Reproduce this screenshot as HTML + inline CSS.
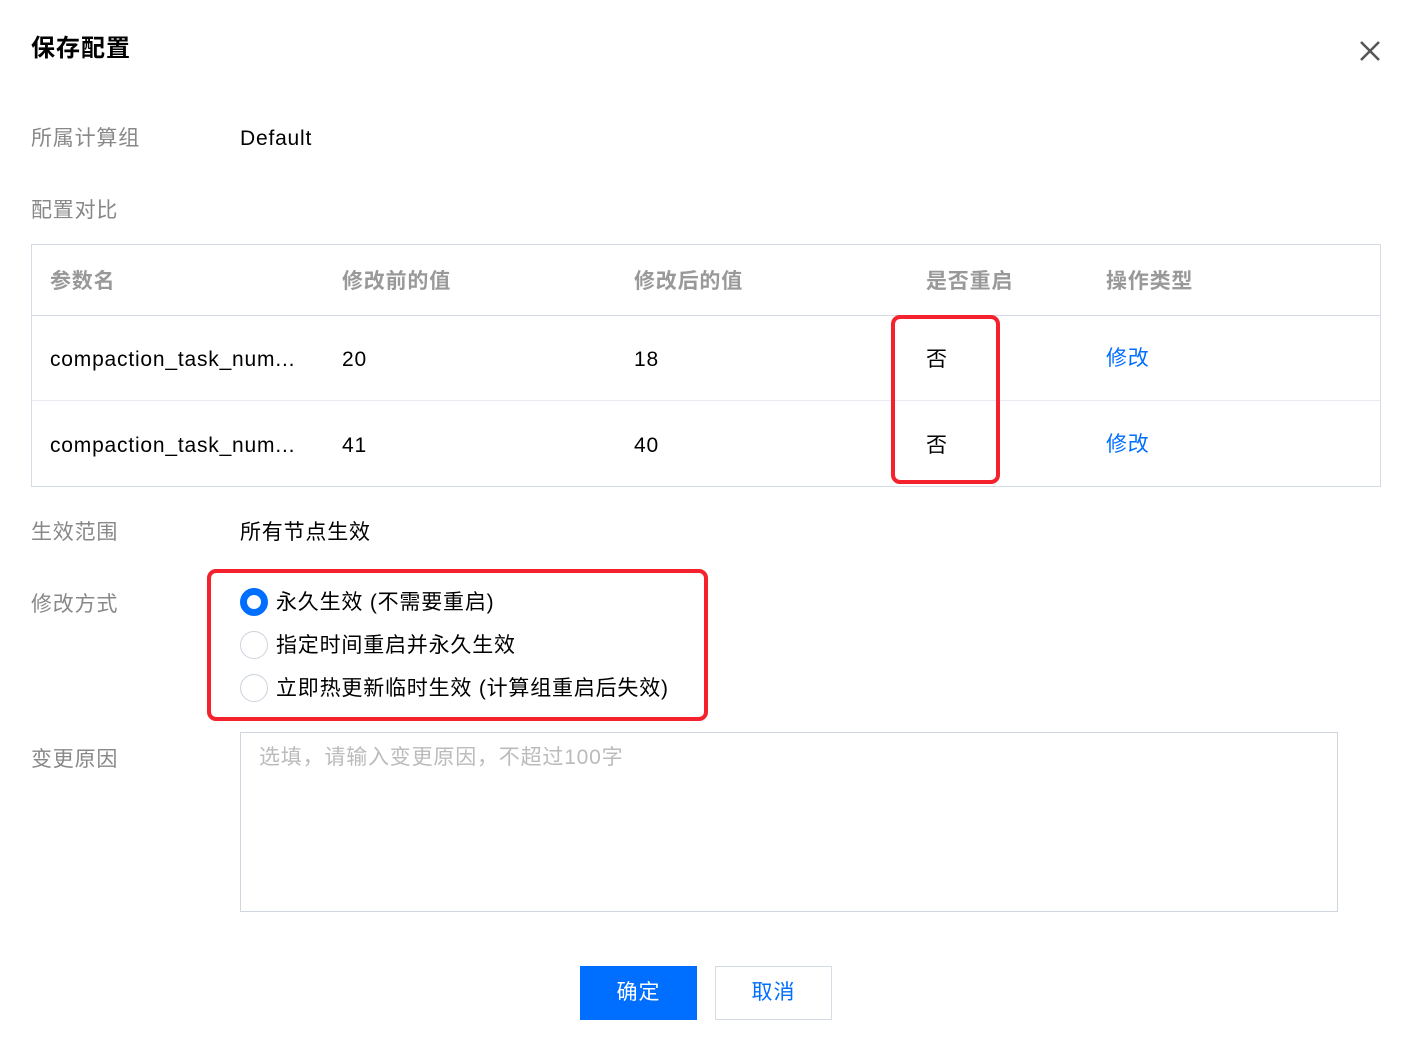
<!DOCTYPE html><html><head><meta charset="utf-8"><style>
body{margin:0;width:1416px;height:1052px;background:#fff;font-family:"Liberation Sans","Noto Sans CJK SC",sans-serif;position:relative;overflow:hidden;color:#000}
.a{position:absolute;white-space:nowrap;font-size:21px;line-height:24px;letter-spacing:0.8px}
.g{color:#888}
.h{color:#999;font-weight:bold}
.b{color:#006eff}
.red{position:absolute;border:4px solid #f5222d;border-radius:9px;box-sizing:border-box}
.r{position:absolute;left:240px;width:28px;height:28px;border-radius:50%;box-sizing:border-box;border:1px solid #ccd2dc}
</style></head><body>
<div class="a" style="left:31px;top:35px;font-size:24px;font-weight:bold;line-height:28px;letter-spacing:1px">保存配置</div>
<svg class="a" style="left:1359px;top:40px" width="22" height="22"><path d="M2 2L20 20M20 2L2 20" stroke="#555" stroke-width="2.5"/></svg>
<div class="a g" style="left:31px;top:127px">所属计算组</div>
<div class="a" style="left:240px;top:127px">Default</div>
<div class="a g" style="left:31px;top:199px">配置对比</div>
<div style="position:absolute;left:31px;top:244px;width:1350px;height:243px;border:1px solid #d5dbe5;box-sizing:border-box"></div>
<div style="position:absolute;left:32px;top:315px;width:1348px;height:1px;background:#d5dbe5"></div>
<div style="position:absolute;left:32px;top:400px;width:1348px;height:1px;background:#e8ecf2"></div>
<div class="a h" style="left:50px;top:270px">参数名</div>
<div class="a h" style="left:342px;top:270px">修改前的值</div>
<div class="a h" style="left:634px;top:270px">修改后的值</div>
<div class="a h" style="left:926px;top:270px">是否重启</div>
<div class="a h" style="left:1106px;top:270px">操作类型</div>
<div class="a" style="left:50px;top:348px">compaction_task_num...</div>
<div class="a" style="left:342px;top:348px">20</div>
<div class="a" style="left:634px;top:348px">18</div>
<div class="a" style="left:926px;top:348px">否</div>
<div class="a b" style="left:1106px;top:347px">修改</div>
<div class="a" style="left:50px;top:434px">compaction_task_num...</div>
<div class="a" style="left:342px;top:434px">41</div>
<div class="a" style="left:634px;top:434px">40</div>
<div class="a" style="left:926px;top:434px">否</div>
<div class="a b" style="left:1106px;top:433px">修改</div>
<div class="red" style="left:891px;top:315px;width:109px;height:169px"></div>
<div class="a g" style="left:31px;top:521px">生效范围</div>
<div class="a" style="left:240px;top:521px">所有节点生效</div>
<div class="a g" style="left:31px;top:593px">修改方式</div>
<div class="red" style="left:207px;top:569px;width:501px;height:152px"></div>
<div class="r" style="top:588px;border:7px solid #006eff"></div>
<div class="r" style="top:631px"></div>
<div class="r" style="top:674px"></div>
<div class="a" style="left:276px;top:591px">永久生效 (不需要重启)</div>
<div class="a" style="left:276px;top:634px">指定时间重启并永久生效</div>
<div class="a" style="left:276px;top:677px">立即热更新临时生效 (计算组重启后失效)</div>
<div class="a g" style="left:31px;top:748px">变更原因</div>
<div style="position:absolute;left:240px;top:732px;width:1098px;height:180px;border:1px solid #cfd5de;box-sizing:border-box"></div>
<div class="a" style="left:259px;top:746px;color:#bbb">选填，请输入变更原因，不超过100字</div>
<div style="position:absolute;left:580px;top:966px;width:117px;height:54px;background:#006eff;color:#fff;font-size:21px;line-height:54px;text-align:center;letter-spacing:1px">确定</div>
<div style="position:absolute;left:715px;top:966px;width:117px;height:54px;border:1px solid #d5dbe5;box-sizing:border-box;color:#006eff;font-size:21px;line-height:52px;text-align:center;letter-spacing:1px">取消</div>
</body></html>
